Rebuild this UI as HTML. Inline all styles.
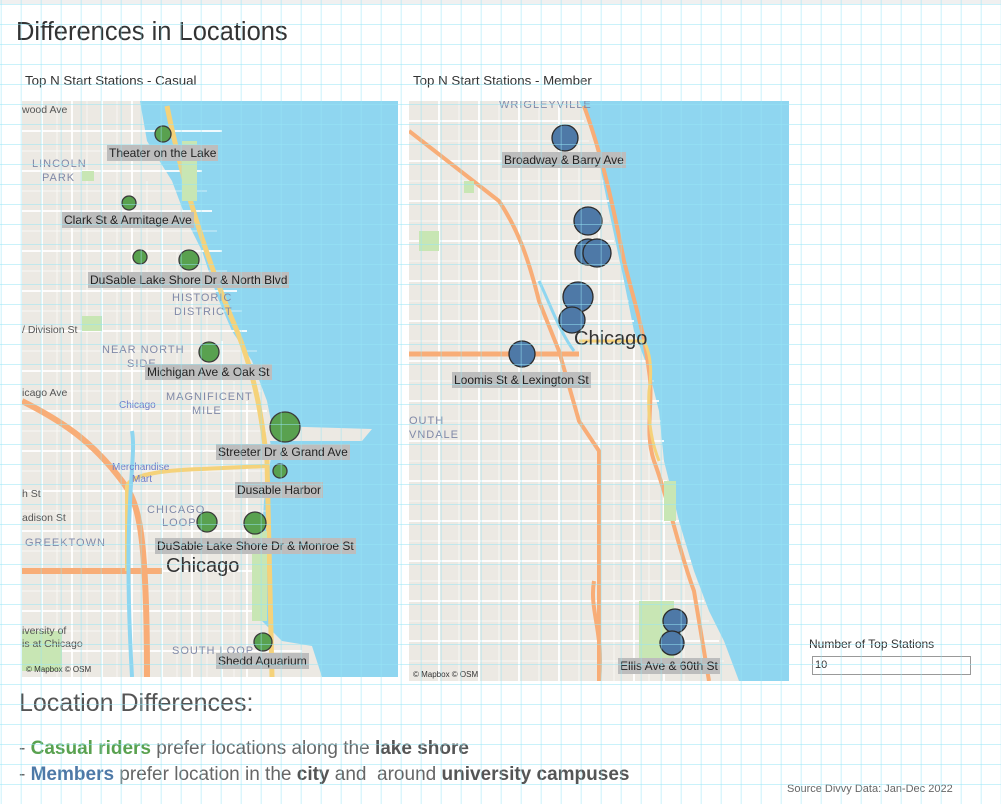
<!DOCTYPE html>
<html><head><meta charset="utf-8">
<style>
*{margin:0;padding:0;box-sizing:border-box}
body{width:1001px;height:804px;background:#fff;position:relative;overflow:hidden;font-family:"Liberation Sans",sans-serif;color:#333}
.grid{position:absolute;left:0;top:0;width:1001px;height:804px;pointer-events:none;z-index:10;
background-image:linear-gradient(to right,rgba(150,230,245,.5) 1px,transparent 1px),linear-gradient(to bottom,rgba(150,230,245,.5) 1px,transparent 1px);
background-size:20px 20px;background-position:0.7px 4px}
.topbar{position:absolute;left:0;top:0;width:1001px;height:4px;background:#f0f0f0}
.t{position:absolute;white-space:nowrap}
svg{position:absolute}
.lbl{position:absolute;background:#bdbdbd;font-size:12px;color:#222;height:16px;line-height:16px;padding:0 2px;white-space:nowrap;z-index:5}
</style></head><body>
<div class="topbar"></div>
<div class="t" style="left:16px;top:18px;font-size:25.5px;color:#333">Differences in Locations</div>
<div class="t" style="left:25px;top:73px;font-size:13.3px;color:#333">Top N Start Stations - Casual</div>
<div class="t" style="left:413px;top:73px;font-size:13.3px;color:#333">Top N Start Stations - Member</div>

<svg style="left:22px;top:101px" width="376" height="576" viewBox="0 0 376 576">
<rect width="376" height="576" fill="#ece9e3"/>
<polygon fill="#8fd6f0" points="118,0 376,0 376,576 300,576 290,545 260,540 240,520 238,470 242,400 250,350 248,340 340,340 350,328 250,325 245,300 230,260 210,230 195,195 180,150 165,120 150,80 125,40"/>
<g stroke="#fff" stroke-width="1.8" fill="none">
<path d="M0,30H200M0,70H180M0,110H190M0,150H200M0,190H215M0,230H225M0,270H240M0,310H245M0,350H245M0,390H245M0,430H240M0,470H240M0,510H240M0,550H280"/>
<path d="M20,0V576M50,0V576M80,0V576M110,0V576M140,120V576M170,180V576M200,240V576M225,300V576"/>
</g>
<g stroke="#fff" stroke-width=".7" fill="none" opacity=".8">
<path d="M0,50H190M0,90H185M0,130H195M0,170H205M0,210H220M0,250H235M0,290H240M0,330H245M0,370H245M0,410H245M0,450H240M0,490H240M0,530H240"/>
<path d="M35,0V576M65,0V576M95,0V576M125,80V576M155,150V576M185,200V576M212,280V576"/>
</g>
<path d="M0,300 C40,320 70,340 100,380 C115,400 125,420 125,576" stroke="#f8ad77" stroke-width="6" fill="none"/>
<path d="M0,470H140" stroke="#f8ad77" stroke-width="6" fill="none"/>
<path d="M145,5 C160,80 185,160 215,230 C235,280 240,320 245,360 L250,576" stroke="#f5d27a" stroke-width="5" fill="none"/>
<path d="M105,470 V385 Q110,370 180,368 L245,365" stroke="#f5d27a" stroke-width="4" fill="none"/>
<path d="M110,330 C115,360 100,400 110,576" stroke="#8fd6f0" stroke-width="4" fill="none"/>
<g fill="#c8e6b4"><rect x="160" y="40" width="15" height="60"/><rect x="60" y="70" width="12" height="10"/><rect x="60" y="215" width="20" height="15"/><rect x="230" y="430" width="15" height="90"/><rect x="0" y="530" width="40" height="40"/></g>
<g font-family="Liberation Sans" font-size="11" fill="#8089a8" letter-spacing="1">
<text x="10" y="66">LINCOLN</text><text x="20" y="80">PARK</text>
<text x="150" y="200">HISTORIC</text><text x="152" y="214">DISTRICT</text>
<text x="80" y="252">NEAR NORTH</text><text x="105" y="266">SIDE</text>
<text x="144" y="299">MAGNIFICENT</text><text x="170" y="313">MILE</text>
<text x="125" y="412">CHICAGO</text><text x="140" y="425">LOOP</text>
<text x="3" y="445">GREEKTOWN</text><text x="150" y="553">SOUTH LOOP</text>
</g>
<g font-family="Liberation Sans" font-size="10.5" fill="#555">
<text x="0" y="12">wood Ave</text><text x="0" y="232">/ Division St</text><text x="0" y="295">icago Ave</text>
<text x="0" y="396">h St</text><text x="0" y="420">adison St</text><text x="0" y="533">iversity of</text><text x="0" y="546">is at Chicago</text>
</g>
<text x="97" y="307" font-family="Liberation Sans" font-size="10" fill="#6b7bc9">Chicago</text>
<text x="90" y="369" font-family="Liberation Sans" font-size="10" fill="#6b7bc9">Merchandise</text>
<text x="110" y="381" font-family="Liberation Sans" font-size="10" fill="#6b7bc9">Mart</text>
<text x="144" y="471" font-family="Liberation Sans" font-size="20" fill="#333">Chicago</text>
<text x="4" y="571" font-family="Liberation Sans" font-size="8" fill="#333">© Mapbox © OSM</text>
</svg>

<svg style="left:409px;top:101px" width="380" height="580" viewBox="0 0 380 580">
<rect width="380" height="580" fill="#ece9e3"/>
<polygon fill="#8fd6f0" points="170,0 380,0 380,580 330,580 315,540 300,510 285,470 270,420 255,360 250,310 240,270 225,230 215,180 200,110 190,60 180,20"/>
<g stroke="#fff" stroke-width="1.8" fill="none">
<path d="M0,20H175M0,60H190M0,100H200M0,140H205M0,180H215M0,220H225M0,260H240M0,300H250M0,340H255M0,380H258M0,420H270M0,460H282M0,500H295M0,540H310"/>
<path d="M30,0V580M70,0V580M110,0V580M150,0V580M190,120V580M225,240V580M255,380V580"/>
</g>
<g stroke="#fff" stroke-width=".7" fill="none" opacity=".8">
<path d="M0,40H180M0,80H195M0,120H200M0,160H210M0,200H220M0,240H235M0,280H245M0,320H252M0,360H255M0,400H262M0,440H275M0,480H288M0,520H300M0,560H315"/>
<path d="M50,0V580M90,0V580M130,0V580M170,40V580M205,180V580M240,300V580M275,460V580"/>
</g>
<path d="M0,30 L90,100 C110,130 120,160 130,200 L150,250 L170,320 L190,350 L190,580" stroke="#f8ad77" stroke-width="4" fill="none"/>
<path d="M0,253H170" stroke="#f8ad77" stroke-width="5" fill="none"/>
<path d="M175,5 C195,60 205,110 215,160 C225,200 235,230 240,270 C245,300 235,330 245,360 C260,400 270,450 285,490 L300,580" stroke="#f8ad77" stroke-width="4" fill="none"/>
<path d="M170,240 H235 Q245,260 240,290 Q238,330 250,360" stroke="#f5d27a" stroke-width="3" fill="none"/>
<path d="M185,480 C180,510 195,530 190,580" stroke="#f8ad77" stroke-width="4" fill="none"/>
<g fill="#c8e6b4"><rect x="10" y="130" width="20" height="20"/><rect x="55" y="80" width="10" height="12"/><rect x="230" y="500" width="35" height="70"/><rect x="255" y="380" width="12" height="40"/></g>
<path d="M130,180 C140,200 150,230 165,250" stroke="#8fd6f0" stroke-width="3" fill="none"/>
<text x="90" y="7" font-family="Liberation Sans" font-size="11" fill="#8089a8" letter-spacing="1">WRIGLEYVILLE</text>
<text x="0" y="323" font-family="Liberation Sans" font-size="11" fill="#8089a8" letter-spacing="1">OUTH</text>
<text x="0" y="337" font-family="Liberation Sans" font-size="11" fill="#8089a8" letter-spacing="1">VNDALE</text>
<text x="165" y="244" font-family="Liberation Sans" font-size="20" fill="#333">Chicago</text>
<text x="4" y="576" font-family="Liberation Sans" font-size="8" fill="#333">© Mapbox © OSM</text>
</svg>

<svg style="left:0;top:0;z-index:4" width="1001" height="804">
<g fill="#59a14f" stroke="#3a3a3a" stroke-width="1.3">
<circle cx="163" cy="134" r="8"/><circle cx="129" cy="203" r="7"/><circle cx="140" cy="257" r="7"/><circle cx="189" cy="260" r="10"/>
<circle cx="209" cy="352" r="10"/><circle cx="285" cy="427" r="15"/><circle cx="280" cy="471" r="7"/>
<circle cx="207" cy="522" r="10"/><circle cx="255" cy="523" r="11"/><circle cx="263" cy="642" r="9"/>
</g>
<g fill="#4e79a7" stroke="#2b2b2b" stroke-width="1.3">
<circle cx="565" cy="138" r="13"/><circle cx="588" cy="221" r="14"/><circle cx="588" cy="252" r="13"/><circle cx="597" cy="253" r="14"/>
<circle cx="578" cy="297" r="15"/><circle cx="572" cy="320" r="13"/><circle cx="522" cy="354" r="13"/>
<circle cx="675" cy="621" r="12"/><circle cx="672" cy="643" r="12"/>
</g>
</svg>

<div class="lbl" style="left:107px;top:145px">Theater on the Lake</div>
<div class="lbl" style="left:62px;top:212px">Clark St &amp; Armitage Ave</div>
<div class="lbl" style="left:88px;top:272px">DuSable Lake Shore Dr &amp; North Blvd</div>
<div class="lbl" style="left:145px;top:364px">Michigan Ave &amp; Oak St</div>
<div class="lbl" style="left:216px;top:444px">Streeter Dr &amp; Grand Ave</div>
<div class="lbl" style="left:235px;top:482px">Dusable Harbor</div>
<div class="lbl" style="left:155px;top:538px">DuSable Lake Shore Dr &amp; Monroe St</div>
<div class="lbl" style="left:216px;top:653px">Shedd Aquarium</div>
<div class="lbl" style="left:502px;top:152px">Broadway &amp; Barry Ave</div>
<div class="lbl" style="left:452px;top:372px">Loomis St &amp; Lexington St</div>
<div class="lbl" style="left:618px;top:658px">Ellis Ave &amp; 60th St</div>

<div class="t" style="left:809px;top:637px;font-size:12px;color:#333">Number of Top Stations</div>
<div class="t" style="left:812px;top:656px;width:159px;height:19px;border:1px solid #999;background:#fff;font-size:11px;line-height:17px;padding-left:2px">10</div>

<div class="t" style="left:19px;top:689px;font-size:25px;color:#555">Location Differences:</div>
<div class="t" style="left:19px;top:738px;font-size:19px;color:#666">- <b style="color:#59a14f">Casual riders</b> prefer locations along the <b style="color:#555">lake shore</b></div>
<div class="t" style="left:19px;top:764px;font-size:19px;color:#666">- <b style="color:#4e79a7">Members</b> prefer location in the <b style="color:#555">city</b> and &nbsp;around <b style="color:#555">university campuses</b></div>
<div class="t" style="left:787px;top:783px;font-size:11px;color:#666">Source Divvy Data: Jan-Dec 2022</div>
<div class="grid"></div>
</body></html>
